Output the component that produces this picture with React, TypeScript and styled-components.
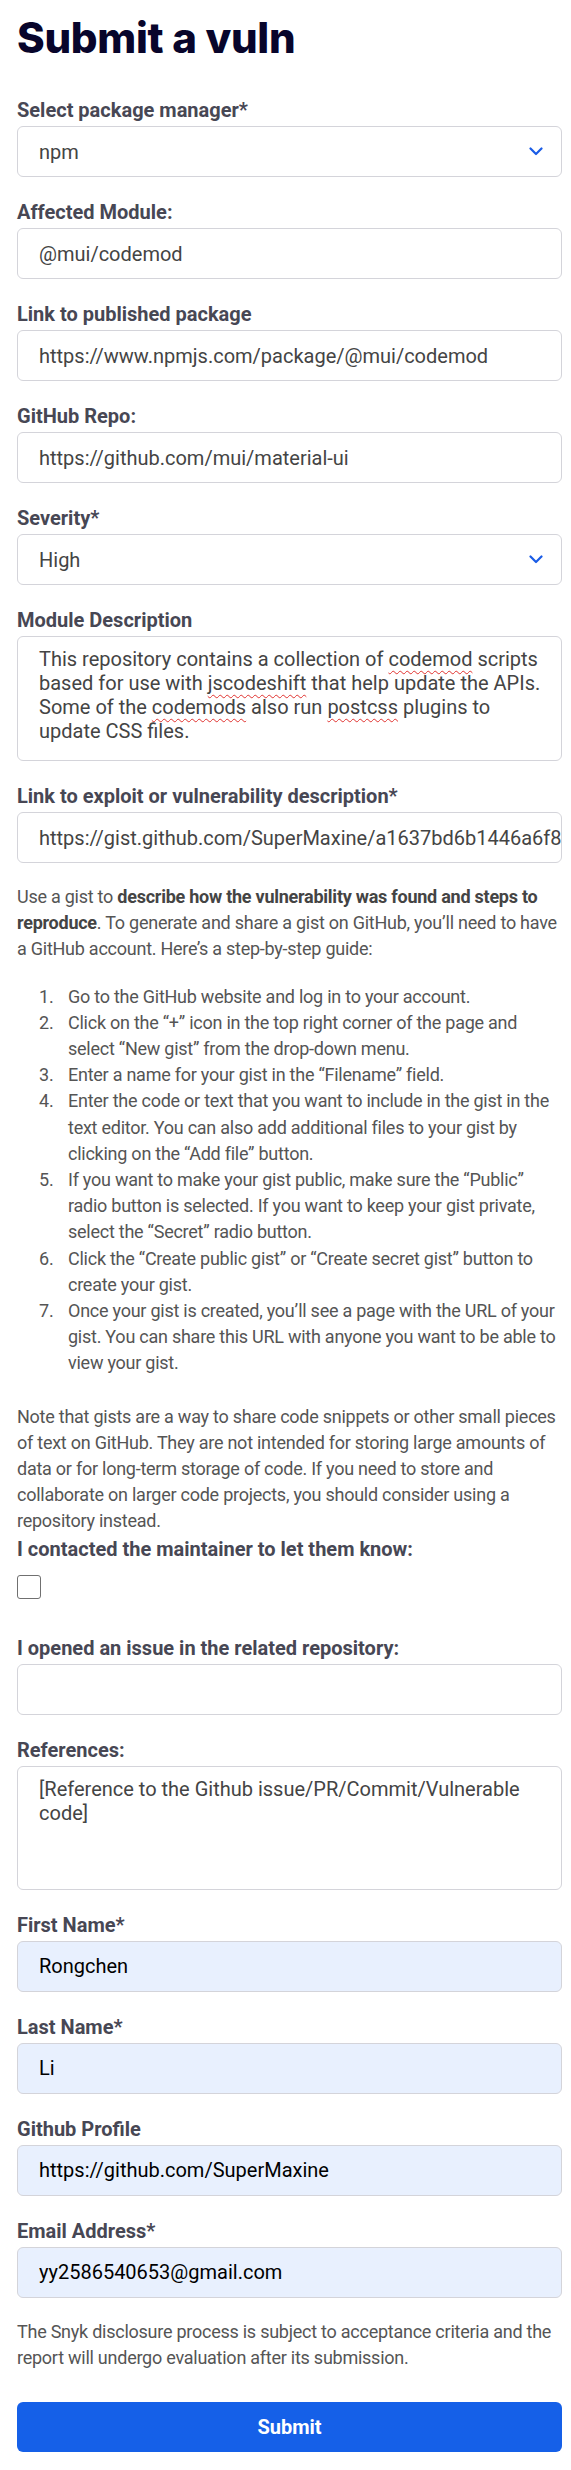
import React from 'react';
import styled, { createGlobalStyle } from 'styled-components';

const GlobalStyle = createGlobalStyle`
  body {
    margin: 0;
    background: #ffffff;
    font-family: Roboto, "Liberation Sans", Arial, sans-serif;
  }
`;

const steps = [
  'Go to the GitHub website and log in to your account.',
  'Click on the \u201c+\u201d icon in the top right corner of the page and select \u201cNew gist\u201d from the drop-down menu.',
  'Enter a name for your gist in the \u201cFilename\u201d field.',
  'Enter the code or text that you want to include in the gist in the text editor. You can also add additional files to your gist by clicking on the \u201cAdd file\u201d button.',
  'If you want to make your gist public, make sure the \u201cPublic\u201d radio button is selected. If you want to keep your gist private, select the \u201cSecret\u201d radio button.',
  'Click the \u201cCreate public gist\u201d or \u201cCreate secret gist\u201d button to create your gist.',
  'Once your gist is created, you\u2019ll see a page with the URL of your gist. You can share this URL with anyone you want to be able to view your gist.',
];

const Chevron = () => (
  <ChevronIcon width="14" height="9" viewBox="0 0 14 9" fill="none">
    <path d="M1.5 1.5L7 7l5.5-5.5" stroke="#1a5ce6" strokeWidth="2.2" strokeLinecap="round" strokeLinejoin="round" />
  </ChevronIcon>
);

const App: React.FunctionComponent = () => (
  <>
    <GlobalStyle />
    <Page>
      <Title>Submit a vuln</Title>

      <Field>
        <Label>Select package manager*</Label>
        <SelectWrap>
          <Select defaultValue="npm">
            <option value="npm">npm</option>
          </Select>
          <Chevron />
        </SelectWrap>
      </Field>

      <Field>
        <Label>Affected Module:</Label>
        <Input defaultValue="@mui/codemod" />
      </Field>

      <Field>
        <Label>Link to published package</Label>
        <Input defaultValue="https://www.npmjs.com/package/@mui/codemod" />
      </Field>

      <Field>
        <Label>GitHub Repo:</Label>
        <Input defaultValue="https://github.com/mui/material-ui" />
      </Field>

      <Field>
        <Label>Severity*</Label>
        <SelectWrap>
          <Select defaultValue="high">
            <option value="high">High</option>
          </Select>
          <Chevron />
        </SelectWrap>
      </Field>

      <Field>
        <Label>Module Description</Label>
        <TextBox role="textbox" $height={125}>
          This repository contains a collection of <Spell>codemod</Spell> scripts based for use with{' '}
          <Spell>jscodeshift</Spell> that help update the APIs. Some of the <Spell>codemods</Spell> also run{' '}
          <Spell>postcss</Spell> plugins to update CSS files.
        </TextBox>
      </Field>

      <Field>
        <Label>Link to exploit or vulnerability description*</Label>
        <Input $clip defaultValue="https://gist.github.com/SuperMaxine/a1637bd6b1446a6f8f6b7c5e2d1a9b3c" />
      </Field>

      <Intro>
        Use a gist to <strong>describe how the vulnerability was found and steps to reproduce</strong>. To generate
        and share a gist on GitHub, you&rsquo;ll need to have a GitHub account. Here&rsquo;s a step-by-step guide:
      </Intro>

      <Steps>
        {steps.map((s, i) => (
          <Step key={i}>{s}</Step>
        ))}
      </Steps>

      <Note>
        Note that gists are a way to share code snippets or other small pieces of text on GitHub. They are not
        intended for storing large amounts of data or for long-term storage of code. If you need to store and
        collaborate on larger code projects, you should consider using a repository instead.
      </Note>

      <CheckField>
        <Label>I contacted the maintainer to let them know:</Label>
        <Checkbox type="checkbox" />
      </CheckField>

      <Field>
        <Label>I opened an issue in the related repository:</Label>
        <Input defaultValue="" />
      </Field>

      <Field>
        <Label>References:</Label>
        <TextBox role="textbox" $height={124}>
          [Reference to the Github issue/PR/Commit/Vulnerable code]
        </TextBox>
      </Field>

      <Field>
        <Label>First Name*</Label>
        <Input $filled defaultValue="Rongchen" />
      </Field>

      <Field>
        <Label>Last Name*</Label>
        <Input $filled defaultValue="Li" />
      </Field>

      <Field>
        <Label>Github Profile</Label>
        <Input $filled defaultValue="https://github.com/SuperMaxine" />
      </Field>

      <Field>
        <Label>Email Address*</Label>
        <Input $filled defaultValue="yy2586540653@gmail.com" />
      </Field>

      <Disclaimer>
        The Snyk disclosure process is subject to acceptance criteria and the report will undergo evaluation after
        its submission.
      </Disclaimer>

      <SubmitButton type="button">Submit</SubmitButton>
    </Page>
  </>
);

const Page = styled.main`
  width: 571px;
  box-sizing: border-box;
  padding: 14px 9px 14px 17px;
`;

const Title = styled.h1`
  margin: 0 0 36px;
  font-family: Inter, "DejaVu Sans", sans-serif;
  font-size: 42px;
  font-weight: 800;
  line-height: 48px;
  letter-spacing: -0.3px;
  color: #08052b;
`;

const Field = styled.div`
  margin-bottom: 23px;
`;

const CheckField = styled.div`
  margin-bottom: 37px;
`;

const Label = styled.label`
  display: block;
  margin-bottom: 4px;
  font-size: 20px;
  font-weight: 700;
  line-height: 24px;
  color: #474754;
`;

const Input = styled.input<{ $filled?: boolean; $clip?: boolean }>`
  display: block;
  width: 100%;
  height: 51px;
  box-sizing: border-box;
  margin: 0;
  padding: ${(p) => (p.$clip ? '0 0 0 21px' : '0 21px')};
  border: 1px solid #d4d4da;
  border-radius: 6px;
  background: ${(p) => (p.$filled ? '#e8f0fe' : '#ffffff')};
  font-family: Roboto, "Liberation Sans", Arial, sans-serif;
  font-size: 20px;
  color: ${(p) => (p.$filled ? '#000000' : '#444444')};
  outline: none;
`;

const SelectWrap = styled.div`
  position: relative;
`;

const Select = styled.select`
  display: block;
  width: 100%;
  height: 51px;
  box-sizing: border-box;
  margin: 0;
  padding: 0 50px 0 21px;
  border: 1px solid #d4d4da;
  border-radius: 6px;
  background: #ffffff;
  appearance: none;
  font-family: Roboto, "Liberation Sans", Arial, sans-serif;
  font-size: 20px;
  color: #444444;
  outline: none;
`;

const ChevronIcon = styled.svg`
  position: absolute;
  right: 19px;
  top: 21px;
  pointer-events: none;
`;

const TextBox = styled.div<{ $height: number }>`
  height: ${(p) => p.$height}px;
  box-sizing: border-box;
  padding: 10px 10px 10px 21px;
  border: 1px solid #d4d4da;
  border-radius: 6px;
  font-size: 20px;
  line-height: 24px;
  color: #444444;
`;

const Spell = styled.span`
  text-decoration: underline wavy #e0322f;
  text-decoration-thickness: 1px;
  text-underline-offset: 4px;
  text-decoration-skip-ink: none;
`;

const Prose = styled.p`
  margin: 0 -6px 0 0;
  font-size: 18px;
  line-height: 26.2px;
  letter-spacing: -0.25px;
  color: #555555;

  strong {
    font-weight: 700;
    color: #444444;
  }
`;

const Intro = styled(Prose)`
  margin-top: -2px;
  margin-bottom: 21px;
`;

const Note = styled(Prose)`
  margin-bottom: 2px;
`;

const Disclaimer = styled(Prose)`
  margin-top: -2px;
  margin-bottom: 31px;
`;

const Steps = styled.ol`
  margin: 0 0 27px;
  padding: 0 0 0 22px;
  list-style: none;
  counter-reset: step;
  font-size: 18px;
  line-height: 26.2px;
  letter-spacing: -0.25px;
  color: #555555;
`;

const Step = styled.li`
  display: grid;
  grid-template-columns: 29px 1fr;
  counter-increment: step;

  &::before {
    content: counter(step) '.';
  }
`;

const Checkbox = styled.input`
  display: block;
  width: 24px;
  height: 24px;
  margin: 14px 0 0;
  box-sizing: border-box;
  appearance: none;
  border: 1.5px solid #707070;
  border-radius: 3px;
  background: #ffffff;
`;

const SubmitButton = styled.button`
  display: block;
  width: 100%;
  height: 50px;
  border: none;
  border-radius: 6px;
  background: #1560e8;
  font-family: Roboto, "Liberation Sans", Arial, sans-serif;
  font-size: 20px;
  font-weight: 700;
  color: #ffffff;
  cursor: pointer;
`;

export default App;
